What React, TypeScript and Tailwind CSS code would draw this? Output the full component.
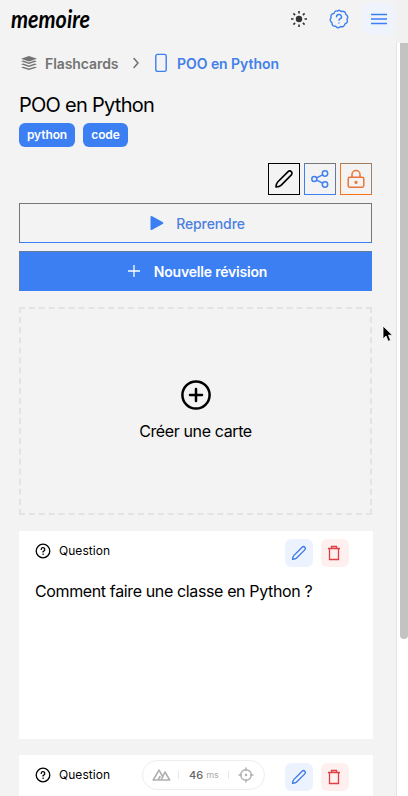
import React from 'react';

const stroke = {
  fill: 'none',
  stroke: 'currentColor',
  strokeLinecap: 'round' as const,
  strokeLinejoin: 'round' as const,
};

function Pencil({ size, width = 1.65 }: { size: number; width?: number }) {
  return (
    <svg width={size} height={size} viewBox="0 0 20 20" {...stroke} strokeWidth={width}>
      <path d="M2 18c.1-1.8.4-3.7 1.7-5L13.6 3.1c1-1 2.6-1.5 3.7-.4s.6 2.7-.4 3.7L7 16.3C5.700 17.600 3.800 17.900 2 18Z" />
    </svg>
  );
}

function Trash() {
  return (
    <svg width="14" height="16" viewBox="0 0 14 16" fill="none" stroke="currentColor" strokeWidth="1.300">
      <path d="M1 3.500h12M4.500 3.500v-2h5v2M2.500 3.500v11h9v-11" />
    </svg>
  );
}

function QuestionCircle() {
  return (
    <svg width="16" height="16" viewBox="0 0 16 16" {...stroke} strokeWidth="1.3">
      <circle cx="8" cy="8" r="6.800" />
      <path d="M6.200 6.400a1.800 1.800 0 1 1 2.500 1.700c-.5.2-.7.5-.7.9" />
      <circle cx="8" cy="11.200" r=".35" fill="currentColor" strokeWidth=".6" />
    </svg>
  );
}

function Header() {
  return (
    <header className="flex h-[38px] items-center pl-[10px] pr-[1px]">
      <svg className="overflow-visible" width="83" height="38" viewBox="0 0 83 38" role="img" aria-label="memoire">
        <text x="1" y="28" textLength="79" lengthAdjust="spacingAndGlyphs" className="fill-black font-['Lato'] text-[25px] font-bold italic">memoire</text>
      </svg>
      <div className="ml-auto flex items-center">
        <svg className="text-[#333]" width="18" height="18" viewBox="0 0 18 18" {...stroke} strokeLinecap="butt" strokeWidth="1.6">
          <circle cx="9" cy="9" r="3.200" fill="currentColor" stroke="none" />
          <path d="M9 1v2.500M9 14.500V17M1 9h2.500M14.500 9H17M3.400 3.400l1.700 1.700M12.900 12.900l1.700 1.700M3.400 14.600l1.700-1.700M12.900 5.100l1.700-1.700" />
        </svg>
        <svg className="ml-[21px] text-[#3b7ff3]" width="20" height="20" viewBox="0 0 20 20" {...stroke} strokeWidth="1.400">
          <path d="M10 1.100Q11 1.300 12.200 2.500Q14.200 2 15.700 2.900Q16.500 3.600 16.800 5.400Q18.300 6.300 18.700 7.700Q18.800 8.800 18 10.200Q18.800 12 18.200 13.200Q17.500 14.300 16 14.900Q15.600 16.700 14.300 17.500Q13 18 11.600 17.500Q10.300 18.900 9 18.700Q7.700 18.500 6.800 17.300Q4.800 17.400 3.800 16.500Q2.900 15.500 3 13.800Q1.500 12.600 1.200 11.400Q1.100 10 2.100 8.700Q1.600 6.800 2.400 5.600Q3.200 4.600 4.900 4.500Q5.500 2.700 6.700 2Q7.800 1.700 8.800 2.100Q9.400 1.300 10 1.100Z" />
          <path d="M7.500 7.800a2.500 2.300 0 1 1 3.500 2.100q-1 .5-1 1.300M10 13.900v.1" />
        </svg>
        <div className="ml-[14px] flex h-8 w-8 items-center justify-center rounded-md bg-[#eef3fc]">
          <svg className="text-[#3b7ff3]" width="16" height="12" viewBox="0 0 16 12" fill="none" stroke="currentColor" strokeWidth="1.500">
            <path d="M0 1.500h16M0 6h16M0 10.500h16" />
          </svg>
        </div>
      </div>
    </header>
  );
}

function Breadcrumb() {
  return (
    <nav className="mt-[13px] flex h-6 items-center pl-[20px] text-[14px] font-semibold text-[#737373]">
      <svg width="18" height="16" viewBox="0 0 18 16" fill="currentColor">
        <path d="M9 1 17 3.700 9 6.400 1 3.700Z" />
        <path d="m1 6.200 2.300-.7L9 7.400l5.700-1.900 2.300.7-8 2.700ZM1 9.300l2.300-.7L9 10.500l5.700-1.900 2.300.7-8 2.700ZM1 12.400l2.300-.7L9 13.600l5.700-1.900 2.300.7-8 2.700Z" />
      </svg>
      <span className="ml-[7px] w-[75px] whitespace-nowrap tracking-[-0.08px]">Flashcards</span>
      <svg className="ml-[12px]" width="8" height="12" viewBox="0 0 8 12" {...stroke} strokeWidth="1.600"><path d="m2 1.500 4 4.500-4 4.500" /></svg>
      <svg className="ml-[15px] text-[#3b7ff3]" width="12" height="20" viewBox="0 0 12 20" {...stroke} strokeWidth="1.400"><rect x=".8" y="1.400" width="10.400" height="17" rx="1.700" /></svg>
      <span className="ml-[10px] whitespace-nowrap text-[#4380e9] tracking-[-0.05px]">POO en Python</span>
    </nav>
  );
}

function QuestionCard({ text }: { text: string }) {
  return (
    <article className="h-[208px] w-[354px] shrink-0 bg-white px-4 pt-2">
      <div className="flex h-7 items-start">
        <div className="flex h-6 items-center gap-2 text-[12px] tracking-[0.05px]"><QuestionCircle />Question</div>
        <div className="ml-auto mr-2 flex gap-2">
          <button className="flex h-7 w-7 items-center justify-center rounded-md bg-[#edf3fe] text-[#3978e7]"><Pencil size={16} /></button>
          <button className="flex h-7 w-7 items-center justify-center rounded-md bg-[#fdf0ef] pr-[2px] text-[#e13f43]"><Trash /></button>
        </div>
      </div>
      <p className="mt-3 text-[16px] leading-6 tracking-[-0.37px]">{text}</p>
    </article>
  );
}

export default function App() {
  return (
    <div className="relative flex h-[796px] w-[408px] overflow-hidden bg-[#f3f3f3] font-['Inter','Liberation_Sans',sans-serif] text-black">
      <div className="h-full w-[396px] shrink-0 overflow-hidden">
        <Header />
        <Breadcrumb />
        <main className="ml-[19px] mt-[18px] w-[353px]">
          <h1 className="text-[20px] leading-6 tracking-[-0.73px]">POO en Python</h1>
          <div className="mt-[6px] flex gap-2 text-[12px] font-semibold leading-6 text-white">
            <span className="h-6 w-14 rounded-md bg-[#3b7ff3] text-center tracking-[-0.1px]">python</span>
            <span className="h-6 w-[45px] rounded-md bg-[#3b7ff3] text-center tracking-[-0.1px]">code</span>
          </div>
          <div className="mt-4 flex h-8 justify-end gap-1">
            <button className="flex w-8 items-center justify-center border border-black"><Pencil size={20} /></button>
            <button className="flex w-8 items-center justify-center border border-[#3b7ff3] border-t-[#777] border-r-[#667a9a] text-[#4380e9]">
              <svg width="18" height="18" viewBox="0 0 18 18" {...stroke} strokeWidth="1.500">
                <circle cx="3.300" cy="9" r="2.500" /><circle cx="14" cy="3.500" r="2.700" /><circle cx="14" cy="14.500" r="2.700" />
                <path d="m5.600 7.900 6-3.100M5.600 10.100l6 3.100" />
              </svg>
            </button>
            <button className="flex w-8 items-center justify-center border border-[#f97316] border-t-[#a17b60] border-r-[#9b8270] text-[#ec733a]">
              <svg width="18" height="20" viewBox="0 0 18 20" {...stroke} strokeWidth="1.500">
                <rect x="1.200" y="8.300" width="15.600" height="10" rx="1.700" /><path d="M5 8V5.500a4 4 0 0 1 8 0V8" /><circle cx="9" cy="13.300" r=".9" fill="currentColor" />
              </svg>
            </button>
          </div>
          <button className="mt-2 flex h-10 w-full items-center justify-center border border-[#777] border-b-[#3b7ff3] pl-1 text-[14px] font-medium text-[#4b80df]">
            <svg className="mr-3" width="14" height="16" viewBox="0 0 14 16" fill="#3b7ff3"><path d="M.5 2.200Q.5.300 2.200 1.200l10 5.500q2.400 1.300 0 2.600l-10 5.500q-1.700.9-1.700-1Z" /></svg>
            <span className="tracking-[-0.1px]">Reprendre</span>
          </button>
          <button className="mt-2 flex h-10 w-full items-center justify-center border border-[#3b7ff3] border-l-[#667a9a] border-t-[#667a9a] bg-[#3b7ff3] pl-1 text-[14px] font-semibold text-white">
            <svg className="mr-[14px]" width="12" height="12" viewBox="0 0 12 12" {...stroke} strokeWidth="1.300"><path d="M6 .5v11M.5 6h11" /></svg>
            <span className="tracking-[-0.2px]">Nouvelle révision</span>
          </button>
          <button className="mt-4 flex h-[208px] w-full flex-col items-center border-2 border-dashed border-[#e3e3e3] pt-[71px]">
            <svg width="30" height="30" viewBox="0 0 30 30" {...stroke} strokeWidth="2.500"><circle cx="15" cy="15" r="13.600" /><path d="M15 9v12M9 15h12" /></svg>
            <span className="mt-[9px] text-[16px] leading-6 tracking-[-0.38px]">Créer une carte</span>
          </button>
          <section className="mt-4 flex flex-col gap-4">
            <QuestionCard text="Comment faire une classe en Python ?" />
            <QuestionCard text="" />
          </section>
        </main>
      </div>
      <aside className="flex h-full w-3 flex-col">
        <div className="h-[43px] shrink-0 bg-[#f1f1f1]" />
        <div className="flex-1 border-l border-[#e4e4e4] bg-white pl-[3px]"><div className="h-[596px] w-2 rounded-b bg-[#c3c3c3]" /></div>
      </aside>
      <div className="absolute left-[142px] top-[760px] flex h-[30px] w-[123px] items-center rounded-full border border-[#ededed] bg-white pl-[9px] text-[#b0b0b0]">
        <svg width="19" height="14" viewBox="0 0 19 14" {...stroke} strokeWidth="1.600"><path d="M10 12H1.200L7 2.200l4 6.800M6 12l2-3.500M9 12h8.700L13 4l-4 8" /></svg>
        <span className="ml-[7px] h-2 w-px bg-[#e8e8e8]" />
        <span className="ml-[10px] text-[11px] font-medium text-[#666]">46</span>
        <span className="ml-[3px] text-[9px] text-[#aaa]">ms</span>
        <span className="ml-[9px] h-2 w-px bg-[#e8e8e8]" />
        <svg className="ml-[9px]" width="16" height="16" viewBox="0 0 16 16" {...stroke} strokeWidth="1.400"><circle cx="8" cy="8" r="5.300" /><circle cx="8" cy="8" r=".6" fill="currentColor" /><path d="M8 1v2.500M8 12.500V15M1 8h2.500M12.500 8H15" /></svg>
      </div>
      <svg className="absolute left-[382px] top-[325px]" width="12" height="18" viewBox="0 0 12 18" stroke="white" strokeWidth=".8" fill="black"><path d="M1 1v13l3-3 2.200 5.300 2.400-1L6.500 10.200H10.500Z" /></svg>
    </div>
  );
}
